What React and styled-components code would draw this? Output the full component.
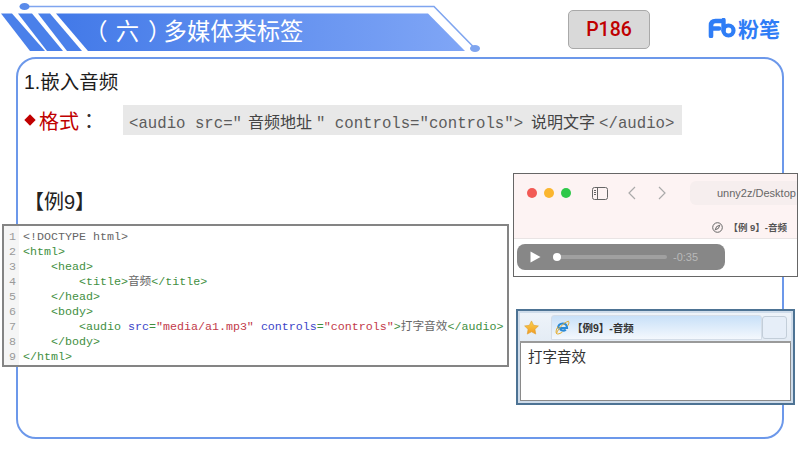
import styled, { createGlobalStyle } from "styled-components";

const GlobalStyle = createGlobalStyle`
  html, body { margin: 0; padding: 0; background: #fff; }
  * { box-sizing: border-box; }
`;

const SANS = `"Liberation Sans", "Noto Sans CJK SC", sans-serif`;
const MONO = `"Liberation Mono", "Noto Sans CJK SC", monospace`;

// Page frame
const Slide = styled.div`
  position: relative;
  width: 800px;
  height: 450px;
  overflow: hidden;
  background: #fff;
  font-family: ${SANS};
`;

const Header = styled.header`
  display: flex;
  align-items: flex-start;
  height: 57px;
`;

const Banner = styled.div`
  position: relative;
  flex: 0 0 568px;
  height: 57px;
`;

const BannerArt = styled.svg`
  position: absolute;
  inset: 0;
`;

const BannerTitle = styled.h1`
  position: relative;
  margin: 0;
  padding: 18px 0 0 96px;
  font-size: 23.3px;
  line-height: 28px;
  font-weight: 400;
  color: #fff;
  white-space: pre;
`;

// half-width parens, the reference sets them tighter than the text
const Paren = styled.span`
  font-feature-settings: "halt";
  margin: 0 ${(p) => p.$after}px 0 ${(p) => p.$before}px;
`;

const PageTag = styled.div`
  width: 82px;
  height: 39px;
  margin-top: 10px;
  display: flex;
  align-items: center;
  justify-content: center;
  background: #d9d9d9;
  border: 1px solid #a9a9a9;
  border-radius: 5px;
  font-family: Roboto, sans-serif;
  font-weight: 500;
  font-size: 19.5px;
  color: #c00000;
`;

const Logo = styled.div`
  display: flex;
  align-items: center;
  gap: 2px;
  margin: 18px 0 0 58px;
  height: 20px;
  font-size: 21px;
  font-weight: 700;
  color: #2f7df6;
`;

// Main card
const Card = styled.main`
  margin: 0 16px;
  height: 382px;
  border: 2px solid #6c98ea;
  border-radius: 20px;
  padding: 9px 0 0 6px;
`;

const Heading = styled.div`
  font-size: 19.5px;
  line-height: 28px;
  color: #1c1c1c;
`;

const FormatRow = styled.div`
  display: flex;
  align-items: center;
  height: 30px;
  margin-top: 9px;
`;

const Diamond = styled.span`
  width: 8px;
  height: 8px;
  margin: 0 5px 0 2px;
  background: #c00000;
  transform: rotate(45deg);
`;

const FormatLabel = styled.span`
  width: 84px;
  font-size: 20px;
  color: #c00000;
  white-space: pre;

  b {
    font-family: "Noto Sans CJK TC", sans-serif;
    font-weight: 400;
    color: #333;
  }
`;

const FormatCode = styled.div`
  width: 559px;
  height: 30px;
  padding-left: 6px;
  background: #e8e8e8;
  font-family: "Liberation Mono", monospace;
  font-size: 15.7px;
  line-height: 33px;
  color: #5c5c5c;
  white-space: pre;
`;

const FormatCjk = styled.span`
  margin: 0 ${(p) => p.$after}px 0 ${(p) => p.$before}px;
  font-family: "Noto Sans CJK SC", serif;
  font-size: 16px;
  color: #444;
`;

const ExampleLabel = styled.div`
  margin: 53px 0 0 0;
  font-size: 20px;
  line-height: 28px;
  color: #222;
`;

// Code listing
const CodeBox = styled.div`
  display: flex;
  width: 507px;
  height: 143px;
  margin: 8px 0 0 -22px;
  position: relative;
  background: #fff;
  border: 2px solid #848484;
  padding: 4px 0 0;
  font-family: ${MONO};
  font-size: 11.67px;
  line-height: 15px;
`;

const Gutter = styled.div`
  width: 15px;
  margin: -4px 0 0;
  padding: 4px 3px 0 0;
  background: #f5f5f5;
  text-align: right;
  color: #9a9a9a;
`;

const CodeBody = styled.div`
  padding-left: 4px;
  color: #3f8f3f;
  white-space: pre;
`;

const Token = styled.span`
  color: ${(p) => ({ doc: "#666", attr: "#3d45c8", str: "#c23a4a", text: "#666" }[p.$kind])};
`;

// Safari window
const MacWindow = styled.section`
  position: absolute;
  left: 513px;
  top: 173px;
  width: 285px;
  height: 104px;
  background: #fff;
  border: 1px solid #666;
  overflow: hidden;
`;

const MacBar = styled.div`
  display: flex;
  flex-direction: column;
  height: 65px;
  background: #fdf3f3;
  border-bottom: 1px solid #e9e4e4;
`;

const MacToolbar = styled.div`
  display: flex;
  align-items: center;
  height: 38px;
  padding-left: 13px;
`;

const Light = styled.span`
  width: 10px;
  height: 10px;
  margin-right: 7px;
  border-radius: 50%;
  background: ${(p) => p.$color};
`;

const ToolIcon = styled.svg`
  flex: none;
  margin-left: ${(p) => p.$gap}px;
`;

const UrlField = styled.div`
  flex: 1;
  height: 24px;
  margin-left: 23px;
  padding-left: 27px;
  background: #f6eeee;
  border-radius: 6px 0 0 6px;
  font-size: 11px;
  line-height: 24px;
  color: #666;
  white-space: nowrap;
`;

const MacTabRow = styled.div`
  display: flex;
  align-items: center;
  justify-content: flex-end;
  gap: 5px;
  padding: 4px 10px 0 0;
  height: 26px;
  font-size: 9.5px;
  font-weight: 700;
  color: #555;
`;

const AudioBar = styled.div`
  display: flex;
  align-items: center;
  width: 208px;
  height: 26px;
  margin: 5px 0 0 3px;
  padding-left: 13px;
  border-radius: 8px;
  background: #878787;
`;

const Track = styled.div`
  position: relative;
  width: 114px;
  height: 4px;
  margin-left: 12px;
  border-radius: 2px;
  background: #a0a0a0;
`;

const Knob = styled.span`
  position: absolute;
  left: 0;
  top: -2px;
  width: 8px;
  height: 8px;
  border-radius: 50%;
  background: #fff;
`;

const Time = styled.span`
  margin-left: 6px;
  font-size: 11px;
  color: #b9b9b9;
`;

// IE window
const IeWindow = styled.section`
  position: absolute;
  left: 516px;
  top: 309px;
  width: 279px;
  height: 96px;
  display: flex;
  flex-direction: column;
  padding: 2px;
  background: #cfdcea;
  border: 2px solid #4d7394;
`;

const IeBar = styled.div`
  display: flex;
  align-items: center;
  height: 30px;
  padding: 1px 2px 0 4px;
  background: linear-gradient(#eef3f9, #e4ecf5);
  border-bottom: 2px solid #9a9a9a;
`;

const IeTab = styled.div`
  display: flex;
  align-items: center;
  gap: 2px;
  width: 211px;
  height: 25px;
  margin-left: 12px;
  padding-left: 3px;
  background: linear-gradient(#c8e0f8, #f4f8fd);
  border: 1px solid #d4dde8;
  border-radius: 3px 3px 0 0;
  font-size: 10.5px;
  font-weight: 700;
  color: #333;
`;

const IeNewTab = styled.div`
  width: 25px;
  height: 23px;
  background: #e6eef8;
  border: 1px solid #c3ced9;
  border-radius: 3px;
`;

const IeContent = styled.div`
  flex: 1;
  padding: 3px 0 0 7px;
  background: #fff;
  border: 1px solid #8a8a8a;
  border-top: 0;
  font-size: 14.5px;
  line-height: 22px;
  color: #333;
`;

const CODE_LINES = [
  <Token $kind="doc">{"<!DOCTYPE html>"}</Token>,
  "<html>",
  "    <head>",
  <>{"        <title>"}<Token $kind="text">音频</Token>{"</title>"}</>,
  "    </head>",
  "    <body>",
  <>
    {"        <audio "}<Token $kind="attr">src</Token>{"="}<Token $kind="str">"media/a1.mp3"</Token>
    {" "}<Token $kind="attr">controls</Token>{"="}<Token $kind="str">"controls"</Token>
    {">"}<Token $kind="text">打字音效</Token>{"</audio>"}
  </>,
  "    </body>",
  "</html>",
];

const App = () => (
  <Slide>
    <GlobalStyle />
    <Header>
      <Banner>
        <BannerArt width="568" height="57" viewBox="0 0 568 57">
          <defs>
            <linearGradient id="bannerFill" x1="0" x2="1" y1="0" y2="0">
              <stop offset="0" stopColor="#4279e8" />
              <stop offset="1" stopColor="#80a6f6" />
            </linearGradient>
          </defs>
          <path d="M1 13.5H12L45 51H30Z" fill="#4a80ea" />
          <path d="M18 13.5H32L63 51H47Z" fill="#4a80ea" />
          <path d="M38 13.5H50L82 51H67Z" fill="#4a80ea" />
          <path d="M56 13.5H428L465 51H88Z" fill="url(#bannerFill)" />
          <path d="M24 6.5H434L475 48.5" fill="none" stroke="#7fa5ef" strokeWidth="1.6" />
          <ellipse cx="24.5" cy="6.5" rx="5" ry="3.6" fill="#5a8bea" />
          <ellipse cx="475" cy="48.5" rx="5" ry="3.4" fill="#7fa5ef" />
        </BannerArt>
        <BannerTitle>
          <Paren $before={0} $after={8}>（</Paren>六<Paren $before={9} $after={4}>）</Paren>多媒体类标签
        </BannerTitle>
      </Banner>
      <PageTag>P186</PageTag>
      <Logo>
        <svg width="28" height="20" viewBox="0 0 28 20">
          <path d="M3 18V7.5C3 4.5 4.5 3 7.5 3H13M3 10.5H11" fill="none" stroke="#2f7df6" strokeWidth="4.6" strokeLinecap="round" />
          <path d="M15.5 2V12.5" fill="none" stroke="#2f7df6" strokeWidth="4.4" strokeLinecap="round" />
          <circle cx="20.5" cy="12.5" r="5" fill="none" stroke="#2f7df6" strokeWidth="4.2" />
        </svg>
        <span>粉笔</span>
      </Logo>
    </Header>

    <Card>
      <Heading>1.嵌入音频</Heading>
      <FormatRow>
        <Diamond />
        <FormatLabel>格式<b>：</b></FormatLabel>
        <FormatCode>
          {'<audio src="'}
          <FormatCjk $before={6} $after={4}>音频地址</FormatCjk>
          {'" controls="controls">'}
          <FormatCjk $before={8} $after={4}>说明文字</FormatCjk>
          {"</audio>"}
        </FormatCode>
      </FormatRow>
      <ExampleLabel>【例9】</ExampleLabel>
      <CodeBox>
        <Gutter>
          {CODE_LINES.map((_, i) => <div key={i}>{i + 1}</div>)}
        </Gutter>
        <CodeBody>
          {CODE_LINES.map((line, i) => <div key={i}>{line}</div>)}
        </CodeBody>
      </CodeBox>
    </Card>

    <MacWindow>
      <MacBar>
        <MacToolbar>
          <Light $color="#f25a55" />
          <Light $color="#fbb62f" />
          <Light $color="#2fc84a" />
          <ToolIcon $gap={14} width="16" height="13" viewBox="0 0 16 13" fill="none" stroke="#666" strokeWidth="1">
            <rect x="0.5" y="0.5" width="15" height="12" rx="2" />
            <path d="M5.5 0.5V12.5M2 3.5H4M2 5.5H4M2 7.5H4" />
          </ToolIcon>
          <ToolIcon $gap={19} width="10" height="14" viewBox="0 0 10 14" fill="none" stroke="#aaa" strokeWidth="1.2">
            <path d="M8 1L2 7L8 13" />
          </ToolIcon>
          <ToolIcon $gap={20} width="10" height="14" viewBox="0 0 10 14" fill="none" stroke="#aaa" strokeWidth="1.2">
            <path d="M2 1L8 7L2 13" />
          </ToolIcon>
          <UrlField>unny2z/Desktop</UrlField>
        </MacToolbar>
        <MacTabRow>
          <svg width="11" height="11" viewBox="0 0 11 11" fill="none" stroke="#666" strokeWidth="1">
            <circle cx="5.5" cy="5.5" r="4.8" />
            <path d="M7.8 3.2L4.6 4.6L3.2 7.8L6.4 6.4Z" />
          </svg>
          <span>【例 9】-音频</span>
        </MacTabRow>
      </MacBar>
      <AudioBar>
        <svg width="11" height="12" viewBox="0 0 11 12">
          <path d="M0.5 0.5L10.5 6L0.5 11.5Z" fill="#fff" />
        </svg>
        <Track><Knob /></Track>
        <Time>-0:35</Time>
      </AudioBar>
    </MacWindow>

    <IeWindow>
      <IeBar>
        <svg width="15" height="15" viewBox="0 0 24 23">
          <defs>
            <linearGradient id="starFill" x1="0" x2="0" y1="0" y2="1">
              <stop offset="0" stopColor="#fbd34f" />
              <stop offset="1" stopColor="#f19a24" />
            </linearGradient>
          </defs>
          <path d="M12 1L15.4 8L23 9L17.5 14.4L18.8 22L12 18.4L5.2 22L6.5 14.4L1 9L8.6 8Z" fill="url(#starFill)" stroke="#e0a030" strokeWidth="1" />
        </svg>
        <IeTab>
          <svg width="15" height="15" viewBox="0 0 15 15" fill="none">
            <path d="M3 8.5C3 5.5 5 3.5 7.8 3.5C10.4 3.5 12 5.4 12 8H5C5.2 10.8 8.8 11.4 10.8 9.6" stroke="#2b8ad6" strokeWidth="2.2" />
            <path d="M1.5 13.5C3 9 8 3 13.5 1.2C14.5 3 13.4 5 12.4 6M3 6.5C0.6 10 0.4 14 2.6 14C4.2 14 6 13 7.4 12" stroke="#e5ac2c" strokeWidth="1" />
          </svg>
          <span>【例9】-音频</span>
        </IeTab>
        <IeNewTab />
      </IeBar>
      <IeContent>打字音效</IeContent>
    </IeWindow>
  </Slide>
);

export default App;
